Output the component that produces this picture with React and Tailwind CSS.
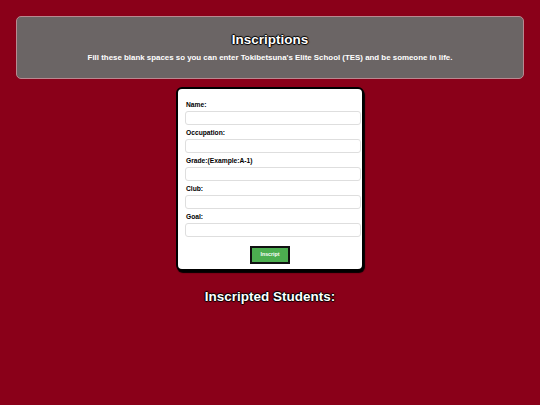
import React from "react";

const fields = ["Name:", "Occupation:", "Grade:(Example:A-1)", "Club:", "Goal:"];

export default function App() {
  return (
    <div
      className="min-h-[405px] w-full bg-[#8a0019] pt-4"
      style={{ fontFamily: '"Liberation Sans", Arial, sans-serif' }}
    >
      <div className="mx-4 h-[63px] rounded-[5px] border border-[#b88990] bg-[#6b6565] flex flex-col items-center">
        <h1 className="mt-[14px] text-[13.5px] leading-[17px] font-bold text-white [text-shadow:1px_0_1px_#000,-1px_0_1px_#000,0_1px_1px_#000,0_-1px_1px_#000]">
          Inscriptions
        </h1>
        <p className="mt-[5px] text-[7.9px] leading-[10px] font-bold text-white">
          Fill these blank spaces so you can enter Tokibetsuna's Elite School (TES) and be someone in life.
        </p>
      </div>

      <div className="mx-auto mt-[8px] w-[188px] h-[184px] rounded-[6px] border-2 border-black bg-white pl-[8px] pt-[12px] shadow-[1px_2px_1px_#000] flex flex-col">
        {fields.map((f) => (
          <div key={f} className="flex flex-col">
            <label className="text-[6.7px] leading-[8px] font-bold text-black">{f}</label>
            <div className="mt-[2px] mb-[4px] -ml-[1px] w-[176px] h-[14px] rounded-[3px] border border-[#dedede] bg-white" />
          </div>
        ))}
        <div className="flex justify-center -ml-[8px] mt-[5px]">
          <div className="w-[40px] h-[18px] bg-[#4caf50] border-2 border-[#111] flex items-center justify-center text-[5.3px] font-bold text-white">
            Inscript
          </div>
        </div>
      </div>

      <h2 className="mt-[18px] text-center text-[13.5px] leading-[16px] font-bold text-white [text-shadow:1px_0_1px_#000,-1px_0_1px_#000,0_1px_1px_#000,0_-1px_1px_#000]">
        Inscripted Students:
      </h2>
    </div>
  );
}
